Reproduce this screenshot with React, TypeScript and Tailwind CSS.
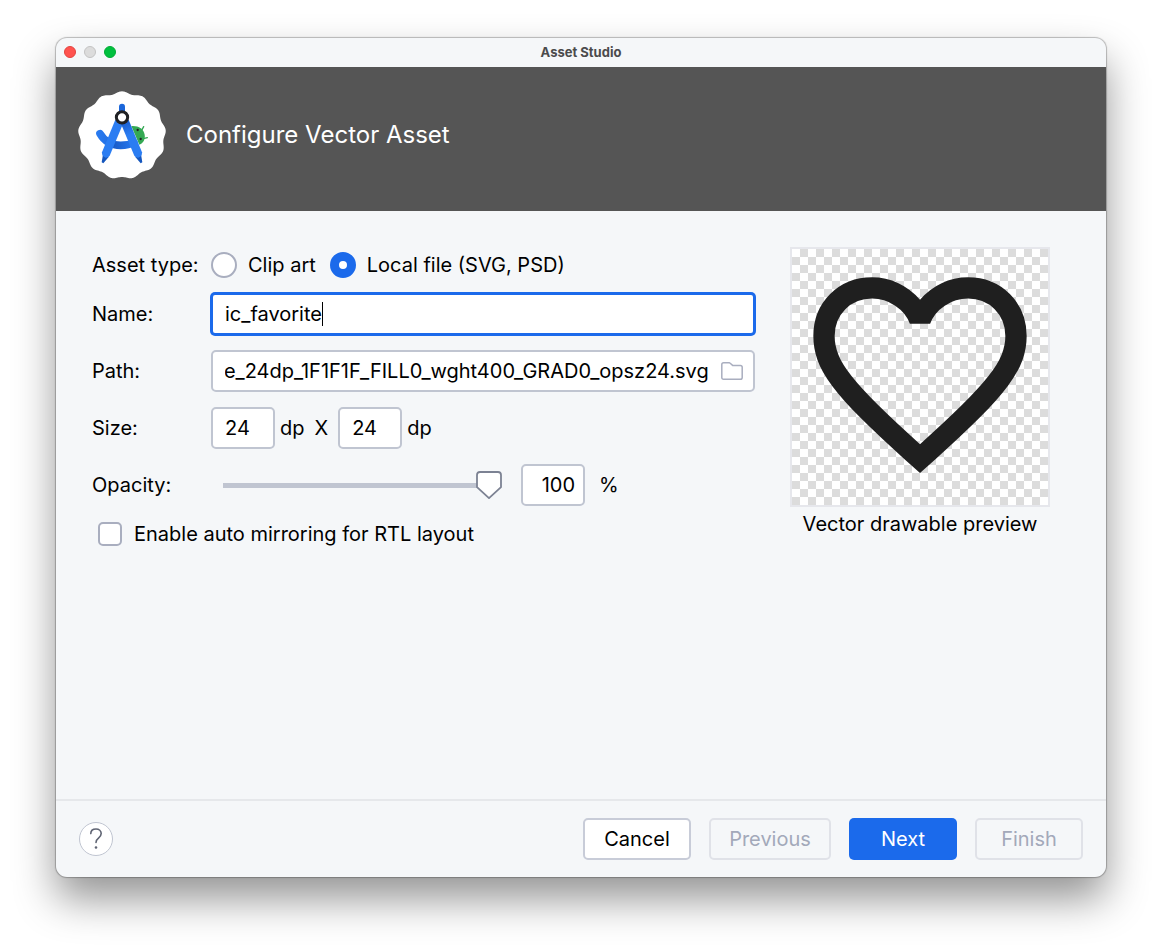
import { useEffect, useRef, useState } from "react";
import type { ReactNode } from "react";

const BADGE_LOBES = 13;

// Scalloped disc behind the logo, as a closed polyline in polar steps.
const badgePath =
  Array.from({ length: 260 }, (_, i) => {
    const a = (i / 260) * Math.PI * 2;
    const r = 128.5 + 3.5 * Math.cos(BADGE_LOBES * a);
    const x = (156 + r * Math.sin(a)).toFixed(2);
    const y = (151 - r * Math.cos(a)).toFixed(2);
    return `${i === 0 ? "M" : "L"}${x} ${y}`;
  }).join("") + "Z";

function StudioLogo() {
  return (
    <svg viewBox="24 18 264 264" className="size-[88px] shrink-0" aria-hidden="true">
      <defs>
        <linearGradient id="arc" x1="80" x2="205" y1="0" y2="0" gradientUnits="userSpaceOnUse">
          <stop offset="0" stopColor="#2a7bf0" />
          <stop offset="0.3" stopColor="#2370e4" />
          <stop offset="0.42" stopColor="#1a5cc8" />
          <stop offset="0.8" stopColor="#2474ea" />
        </linearGradient>
        <linearGradient id="legRight" x1="165" x2="205" y1="110" y2="205" gradientUnits="userSpaceOnUse">
          <stop offset="0" stopColor="#1a5fd0" />
          <stop offset="0.4" stopColor="#2b7df2" />
          <stop offset="1" stopColor="#2b7df2" />
        </linearGradient>
      </defs>
      <path d={badgePath} fill="#fff" />
      <path d="M214 138l7-13M220 161l12-3" stroke="#34a853" strokeWidth="4" strokeLinecap="round" />
      <path d="M184 123c20-2 37 8 40 26 2 14-4 25-16 30z" fill="#34a853" />
      <circle cx="203" cy="135" r="3.5" fill="#202124" />
      <circle cx="212" cy="162" r="3.5" fill="#202124" />
      <path
        d="M90 146Q110 181 152 181Q176 181 192 173"
        fill="none"
        stroke="url(#arc)"
        strokeWidth="23"
        strokeLinecap="round"
      />
      <path d="M147 90V65a9 9 0 0 1 18 0v25z" fill="#1b66da" />
      <path d="M99 208l-4 24 5 3 16-19zM213 208l4 24-5 3-16-19z" fill="#1556bd" />
      <path d="M136 104l-40 98q-1 13 11 16 9 0 12-6l41-98z" fill="#2b7df2" />
      <path d="M176 104l40 98q1 13-11 16-9 0-12-6l-41-98z" fill="url(#legRight)" />
      <circle cx="156" cy="97" r="17" fill="#fff" stroke="#202124" strokeWidth="9" />
    </svg>
  );
}

function Row({ label, htmlFor, children }: { label: string; htmlFor: string; children: ReactNode }) {
  return (
    <div className="flex h-[42px] items-center">
      <label htmlFor={htmlFor} className="w-[119px] shrink-0">
        {label}
      </label>
      {children}
    </div>
  );
}

const numberField =
  "h-[42px] w-16 rounded-[5px] border-2 border-[#c0c5d1] bg-white outline-none";

const radio =
  "size-[26px] shrink-0 appearance-none rounded-full border-2 border-[#a9aebf] bg-white checked:border-[9px] checked:border-[#1b6aeb]";

export default function App() {
  const pathRef = useRef<HTMLInputElement>(null);
  const [name, setName] = useState("ic_favorite");
  const [source, setSource] = useState("file");

  // Long paths show their file name end.
  useEffect(() => {
    const el = pathRef.current;
    if (el) el.scrollLeft = el.scrollWidth;
  }, []);

  return (
    <div className="flex min-h-screen bg-white px-14 pt-[38px] pb-[74px] font-['Inter',sans-serif] text-[20px] leading-6 text-black">
      <main className="flex flex-1 flex-col overflow-hidden rounded-[11px] bg-[#f5f7f9] shadow-[0_0_1px_1px_rgba(0,0,0,0.25),0_22px_42px_rgba(0,0,0,0.42)]">
        <div className="grid h-[29px] shrink-0 grid-cols-[1fr_auto_1fr] items-center px-2 pb-px">
          <div className="flex gap-2">
            <button type="button" aria-label="Close" className="size-3 rounded-full border border-[#e2443f] bg-[#ff534f]" />
            <button type="button" aria-label="Minimize" className="size-3 rounded-full border border-[#c3c3c3] bg-[#dcdcdc]" />
            <button type="button" aria-label="Zoom" className="size-3 rounded-full border border-[#00ab34] bg-[#00c03f]" />
          </div>
          <span className="text-[13px] leading-4 font-bold text-[#4b4b4c]">Asset Studio</span>
        </div>

        <header className="flex h-36 shrink-0 items-center gap-5 bg-[#555555] px-[22px] pb-2">
          <StudioLogo />
          <h1 className="text-[24px] leading-8 font-normal text-white">Configure Vector Asset</h1>
        </header>

        <form className="flex flex-1 flex-col" onSubmit={(e) => e.preventDefault()}>
          <div className="flex flex-1 items-start gap-[35px] pt-9 pr-14 pl-9">
            <div className="flex min-w-0 flex-1 flex-col">
              <div role="radiogroup" aria-label="Asset type" className="mb-2.5 flex h-9 items-center">
                <span className="w-[119px] shrink-0">Asset type:</span>
                <label className="mr-3.5 flex items-center gap-[11px]">
                  <input type="radio" name="source" className={radio} checked={source === "clip"} onChange={() => setSource("clip")} />
                  Clip art
                </label>
                <label className="flex items-center gap-[11px]">
                  <input type="radio" name="source" className={radio} checked={source === "file"} onChange={() => setSource("file")} />
                  Local file (SVG, PSD)
                </label>
              </div>

              <div className="flex flex-col gap-[15px]">
                <Row label="Name:" htmlFor="name">
                  <div className="flex h-[42px] min-w-0 flex-1 items-center rounded-[4px] border-2 border-[#1b6aeb] bg-white pl-3 ring-1 ring-[#1b6aeb]">
                    <input
                      id="name"
                      value={name}
                      onChange={(e) => setName(e.target.value)}
                      className="field-sizing-content bg-transparent caret-transparent outline-none"
                    />
                    <span className="h-6 w-px bg-black" />
                  </div>
                </Row>

                <Row label="Path:" htmlFor="path">
                  <div className="flex h-[42px] min-w-0 flex-1 items-center gap-3 rounded-[5px] border-2 border-[#c0c5d1] bg-white pr-2.5 pl-3">
                    <input
                      id="path"
                      ref={pathRef}
                      defaultValue="favorite_24dp_1F1F1F_FILL0_wght400_GRAD0_opsz24.svg"
                      className="min-w-0 flex-1 bg-transparent outline-none"
                    />
                    <button type="button" aria-label="Browse" className="shrink-0">
                      <svg viewBox="0 0 22 18" className="h-[18px] w-[22px]" fill="none" stroke="#a9aebf" strokeWidth="1.5" strokeLinejoin="round">
                        <path d="M.8 2.6Q.8.8 2.6.8h5.6q.6 0 1 .4l2.4 2.2h7.8q1.8 0 1.8 1.8v10.2q0 1.8-1.8 1.8H2.6Q.8 17.2.8 15.4z" />
                      </svg>
                    </button>
                  </div>
                </Row>

                <Row label="Size:" htmlFor="width">
                  <input id="width" defaultValue="24" className={`${numberField} pl-3`} />
                  <span className="ml-[5px]">dp</span>
                  <span className="mx-2.5">X</span>
                  <input aria-label="Height" defaultValue="24" className={`${numberField} pl-3`} />
                  <span className="ml-[5px]">dp</span>
                </Row>

                <Row label="Opacity:" htmlFor="opacity">
                  <div className="relative -ml-px flex h-7 w-[292px] items-center">
                    <input
                      id="opacity"
                      type="range"
                      min={0}
                      max={100}
                      defaultValue={100}
                      className="h-7 w-full appearance-none bg-transparent outline-none [&::-webkit-slider-runnable-track]:h-[5px] [&::-webkit-slider-runnable-track]:bg-[linear-gradient(#c0c5d1,#c0c5d1)] [&::-webkit-slider-runnable-track]:bg-[length:calc(100%-26px)_100%] [&::-webkit-slider-runnable-track]:bg-center [&::-webkit-slider-runnable-track]:bg-no-repeat [&::-webkit-slider-thumb]:h-[5px] [&::-webkit-slider-thumb]:w-[26px] [&::-webkit-slider-thumb]:appearance-none [&::-webkit-slider-thumb]:bg-transparent"
                    />
                    <svg viewBox="0 0 26 28" className="pointer-events-none absolute top-0 right-0 h-7 w-[26px]" fill="#fff" stroke="#7c8293" strokeWidth="1.8" strokeLinejoin="round">
                      <path d="M4 1h18q3 0 3 3v12.2L13 27.2 1 16.2V4q0-3 3-3z" />
                    </svg>
                  </div>
                  <input aria-label="Opacity percent" defaultValue="100" className={`${numberField} ml-[19px] pr-2 text-right`} />
                  <span className="ml-3.5">%</span>
                </Row>
              </div>

              <label className="mt-4 ml-1.5 flex h-6 items-center gap-3 self-start">
                <input type="checkbox" className="size-6 shrink-0 appearance-none rounded-[5px] border-2 border-[#a9aebf] bg-white checked:bg-[#1b6aeb]" />
                Enable auto mirroring for RTL layout
              </label>
            </div>

            <figure className="flex shrink-0 flex-col items-center gap-[5px]">
              <div className="size-[260px] border-2 border-[#e6e7ec] bg-[conic-gradient(#dcdcdc_25%,#fff_0_50%,#dcdcdc_0_75%,#fff_0)] bg-[length:16px_16px]">
                <svg viewBox="0 -960 960 960" className="size-64" fill="#1f1f1f" role="img" aria-label="Heart outline">
                  <path d="m480-120-58-52q-101-91-167-157T150-447.5Q111-500 95.5-544T80-634q0-94 63-157t157-63q52 0 99 22t81 62q34-40 81-62t99-22q94 0 157 63t63 157q0 46-15.5 90T810-447.5Q771-395 705-329T538-172l-58 52Zm0-108q96-86 158-147.5t98-107q36-45.5 50-81t14-70.5q0-60-40-100t-100-40q-47 0-87 26.5T518-680h-76q-15-41-55-67.5T300-774q-60 0-100 40t-40 100q0 35 14 70.5t50 81q36 45.5 98 107T480-228Z" />
                </svg>
              </div>
              <figcaption>Vector drawable preview</figcaption>
            </figure>
          </div>

          <footer className="flex shrink-0 items-center gap-[18px] border-t-2 border-[#e6e8eb] px-[23px] py-[17px]">
            <button type="button" aria-label="Help" className="mr-auto flex size-[34px] items-center justify-center rounded-full border border-[#c0c5d1] bg-white">
              <svg viewBox="0 0 14 24" className="h-6 w-3.5" fill="none" stroke="#5f6473" strokeWidth="1.6" strokeLinecap="round">
                <path d="M1.8 6.6C1.8 3.8 4 2 7 2s5.2 1.9 5.2 4.6c0 2-1.1 3.2-2.7 4.5C7.7 12.5 7 13.4 7 15.4" />
                <circle cx="7" cy="20.5" r="1.3" fill="#5f6473" stroke="none" />
              </svg>
            </button>
            <button type="button" className="h-[42px] w-[108px] rounded-[5px] border-2 border-[#c8ccd8] bg-white">Cancel</button>
            <button type="button" disabled className="h-[42px] w-[122px] rounded-[5px] border-2 border-[#e0e2e8] text-[#a3a9ba]">Previous</button>
            <button type="submit" className="h-[42px] w-[108px] rounded-[5px] bg-[#1b6aeb] text-white">Next</button>
            <button type="button" disabled className="h-[42px] w-[108px] rounded-[5px] border-2 border-[#e0e2e8] text-[#a3a9ba]">Finish</button>
          </footer>
        </form>
      </main>
    </div>
  );
}
